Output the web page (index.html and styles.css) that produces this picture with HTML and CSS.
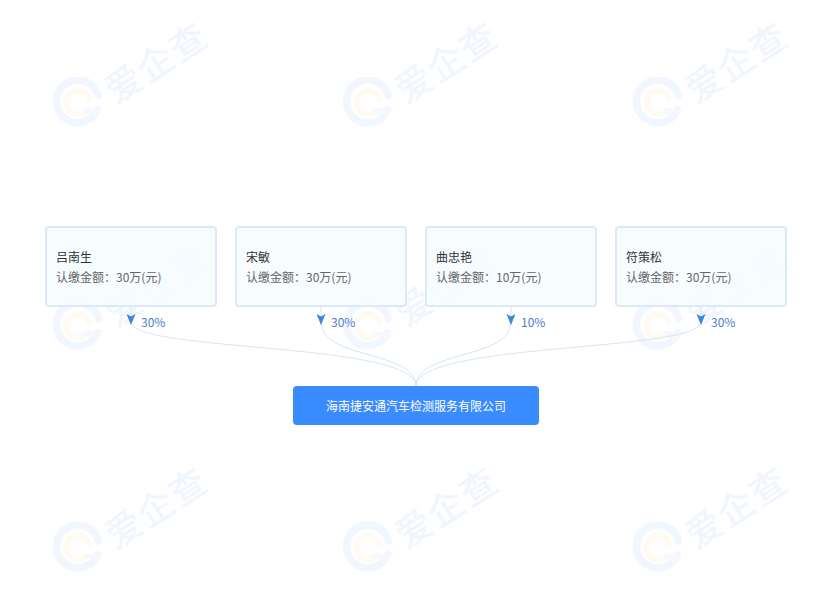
FILE: index.html
```html
<!DOCTYPE html>
<html lang="zh">
<head>
<meta charset="utf-8">
<title>股权结构</title>
<link rel="stylesheet" href="styles.css">
</head>
<body>
<div class="marks" aria-hidden="true">
  <div class="mark"><svg class="mark-logo" viewBox="0 0 56 56"><use href="#q"/></svg><span class="mark-text">爱企查</span></div>
  <div class="mark"><svg class="mark-logo" viewBox="0 0 56 56"><use href="#q"/></svg><span class="mark-text">爱企查</span></div>
  <div class="mark"><svg class="mark-logo" viewBox="0 0 56 56"><use href="#q"/></svg><span class="mark-text">爱企查</span></div>
  <div class="mark"><svg class="mark-logo" viewBox="0 0 56 56"><use href="#q"/></svg><span class="mark-text">爱企查</span></div>
  <div class="mark"><svg class="mark-logo" viewBox="0 0 56 56"><use href="#q"/></svg><span class="mark-text">爱企查</span></div>
  <div class="mark"><svg class="mark-logo" viewBox="0 0 56 56"><use href="#q"/></svg><span class="mark-text">爱企查</span></div>
  <div class="mark"><svg class="mark-logo" viewBox="0 0 56 56"><use href="#q"/></svg><span class="mark-text">爱企查</span></div>
  <div class="mark"><svg class="mark-logo" viewBox="0 0 56 56"><use href="#q"/></svg><span class="mark-text">爱企查</span></div>
  <div class="mark"><svg class="mark-logo" viewBox="0 0 56 56"><use href="#q"/></svg><span class="mark-text">爱企查</span></div>
</div>
<svg class="defs" aria-hidden="true"><defs>
  <g id="q">
    <path d="M50 36.500A24 24 0 1 1 51 21" fill="none" stroke="#f2f7ff" stroke-width="8.500" stroke-linecap="round"/>
    <path d="M38 37A13 13 0 1 1 41 28" fill="none" stroke="#fffbf2" stroke-width="7"/>
    <path d="M38 38L51 39" fill="none" stroke="#f5f8fd" stroke-width="6" stroke-linecap="round"/>
  </g>
</defs></svg>

<main class="chart">
  <section class="holders">
    <article class="holder"><h3 class="holder-name">吕南生</h3><p class="holder-amount">认缴金额：30万(元)</p></article>
    <article class="holder"><h3 class="holder-name">宋敏</h3><p class="holder-amount">认缴金额：30万(元)</p></article>
    <article class="holder"><h3 class="holder-name">曲忠艳</h3><p class="holder-amount">认缴金额：10万(元)</p></article>
    <article class="holder"><h3 class="holder-name">符策松</h3><p class="holder-amount">认缴金额：30万(元)</p></article>
  </section>
  <section class="links">
    <svg class="curves" viewBox="0 0 831 80" width="831" height="80" aria-hidden="true">
      <g class="curve">
        <path d="M131 0V15C131 45 416 35 416 79"/>
        <path d="M321 0V15C321 53 416 43 416 79"/>
        <path d="M511 0V15C511 53 416 43 416 79"/>
        <path d="M701 0V15C701 45 416 35 416 79"/>
      </g>
      <g class="arrow">
        <path d="M126.500 7L131 9.500L135.500 7L131 18Z"/>
        <path d="M316.500 7L321 9.500L325.500 7L321 18Z"/>
        <path d="M506.500 7L511 9.500L515.500 7L511 18Z"/>
        <path d="M696.500 7L701 9.500L705.500 7L701 18Z"/>
      </g>
    </svg>
    <span class="pct">30%</span><span class="pct">30%</span><span class="pct">10%</span><span class="pct">30%</span>
  </section>
  <div class="company">海南捷安通汽车检测服务有限公司</div>
</main>
</body>
</html>
```
FILE: styles.css
```css
* { box-sizing: border-box; }
html, body { margin: 0; height: 100%; }
body {
  position: relative;
  width: 831px;
  height: 610px;
  overflow: hidden;
  background: #fff;
  font-family: "Noto Sans CJK SC", "Liberation Sans", sans-serif;
  font-size: 12px;
}
.defs { position: absolute; width: 0; height: 0; }
.marks {
  position: absolute;
  inset: 0;
  overflow: hidden;
  padding: 17px 0 0 53px;
  display: grid;
  grid-template-columns: repeat(3, 290px);
  grid-auto-rows: 222.5px;
  pointer-events: none;
}
.mark { position: relative; }
.mark-logo {
  position: absolute;
  left: 0;
  top: 60px;
  width: 50px;
  height: 50px;
}
.mark-text {
  position: absolute;
  left: 45px;
  top: 18px;
  font-size: 36px;
  line-height: 50px;
  font-weight: 500;
  letter-spacing: 2px;
  color: #f1f6fe;
  white-space: nowrap;
  transform: rotate(-33deg);
}
.chart {
  position: relative;
  display: flex;
  flex-direction: column;
  padding-top: 226px;
}
.holders {
  display: flex;
  gap: 18px;
  padding-left: 45px;
}
.holder {
  width: 172px;
  height: 81px;
  padding: 19px 9px 0;
  background: rgba(246, 251, 255, .85);
  border: 2px solid #dbeaf6;
  border-radius: 4px;
}
.holder-name {
  margin: 0;
  font-size: 12px;
  font-weight: 400;
  line-height: 20px;
  color: #333;
}
.holder-amount {
  margin: 0;
  font-size: 12px;
  line-height: 20px;
  color: #666;
}
.links {
  position: relative;
  display: flex;
  height: 79px;
  padding: 5px 0 0 141px;
  gap: 165px;
}
.curves { position: absolute; left: 0; top: 0; }
.curve path { fill: none; stroke: #d5e6f5; stroke-width: 1; }
.arrow path { fill: #3b86e0; }
.pct {
  position: relative;
  width: 25px;
  line-height: 20px;
  color: #4a80cc;
  white-space: nowrap;
}
.company {
  width: 246px;
  height: 39px;
  margin-left: 293px;
  background: #3a8bff;
  border-radius: 4px;
  color: #fff;
  text-align: center;
  line-height: 39px;
}
```
